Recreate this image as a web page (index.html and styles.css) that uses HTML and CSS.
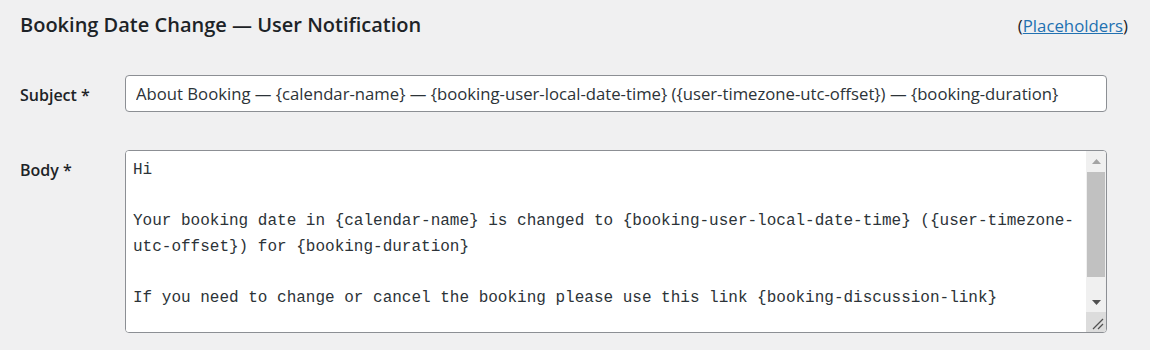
FILE: index.html
```html
<!DOCTYPE html>
<html>
    <head>
        <meta charset="utf-8">
        <title>Booking Date Change — User Notification</title>
        <link rel="stylesheet" href="styles.css">
    </head>
    <body>
        <main class="panel">
            <header class="panel-head">
                <h2 class="panel-title">Booking Date Change — User Notification</h2>
                <span class="help">(<a href="#" class="help-link">Placeholders</a>)</span>
            </header>

            <form class="fields" action="" method="post">
                <label class="field-label" for="subject">Subject *</label>
                <input type="text" id="subject" class="field-input" value="About Booking — {calendar-name} — {booking-user-local-date-time} ({user-timezone-utc-offset}) — {booking-duration}">

                <label class="field-label" for="body">Body *</label>
                <div class="text-box">
                    <textarea id="body" class="field-text">Hi

Your booking date in {calendar-name} is changed to {booking-user-local-date-time} ({user-timezone-utc-offset}) for {booking-duration}

If you need to change or cancel the booking please use this link {booking-discussion-link}

Thanks,
{site-title}</textarea>

                    <div class="scroll-bar">
                        <div class="scroll-btn">
                            <svg width="9" height="5" viewBox="0 0 9 5"><polygon points="0,5 9,5 4.5,0" fill="#a3a3a3"/></svg>
                        </div>
                        <div class="scroll-track">
                            <div class="scroll-thumb"></div>
                        </div>
                        <div class="scroll-btn">
                            <svg width="9" height="5" viewBox="0 0 9 5"><polygon points="0,0 9,0 4.5,5" fill="#505050"/></svg>
                        </div>
                        <div class="scroll-corner">
                            <svg width="12" height="12" viewBox="0 0 12 12">
                                <line x1="1" y1="11" x2="11" y2="1" stroke="#505050" stroke-width="1.2"/>
                                <line x1="6" y1="11" x2="11" y2="6" stroke="#505050" stroke-width="1.2"/>
                            </svg>
                        </div>
                    </div>
                </div>
            </form>
        </main>
    </body>
</html>
```

FILE: styles.css
```css
body
{
    margin: 0;
    background-color: #f0f0f1;
    color: #1d2327;
    font-family: "Open Sans", "Noto Sans", sans-serif;
}

.panel
{
    padding: 12px 22px 0 20px;
}

.panel-head
{
    display: flex;
    justify-content: space-between;
    align-items: center;
}

.panel-title
{
    margin: 0;
    font-size: 20px;
    font-weight: 600;
    line-height: 26px;
}

.help
{
    font-size: 16.8px;
}

.help-link
{
    color: #2271b1;
}

.fields
{
    display: grid;
    grid-template-columns: 105px 1fr;
    row-gap: 38px;
    margin: 37px 21px 0 0;
}

.field-label
{
    padding-top: 9px;
    font-size: 16px;
    font-weight: 600;
    line-height: 22px;
}

.field-input
{
    box-sizing: border-box;
    width: 100%;
    height: 37px;
    padding: 0 10px;
    border: 1px solid #8c8f94;
    border-radius: 4px;
    background: #fff;
    color: #2c3338;
    font-family: "Open Sans", "Noto Sans", sans-serif;
    font-size: 16.7px;
}

.text-box
{
    display: flex;
    height: 183px;
    box-sizing: border-box;
    border: 1px solid #8c8f94;
    border-radius: 4px;
    background: #fff;
    overflow: hidden;
}

.field-text
{
    flex: 1;
    margin: 0;
    padding: 7px 8px 5px 7px;
    border: none;
    outline: none;
    resize: none;
    background: #fff;
    color: #2c3338;
    font-family: "Liberation Mono", monospace;
    font-size: 16px;
    line-height: 25.5px;
    overflow: hidden;
}

.scroll-bar
{
    display: flex;
    flex-direction: column;
    width: 20px;
    background: #f0f0f0;
}

.scroll-btn
{
    display: flex;
    align-items: center;
    justify-content: center;
    height: 20px;
}

.scroll-track
{
    flex: 1;
    padding: 1px 1px 0 1px;
}

.scroll-thumb
{
    height: 105px;
    background: #c1c1c1;
}

.scroll-corner
{
    display: flex;
    align-items: flex-end;
    justify-content: flex-end;
    height: 20px;
    padding: 0 2px 2px 0;
    box-sizing: border-box;
    background: #dcdcdc;
}
```
